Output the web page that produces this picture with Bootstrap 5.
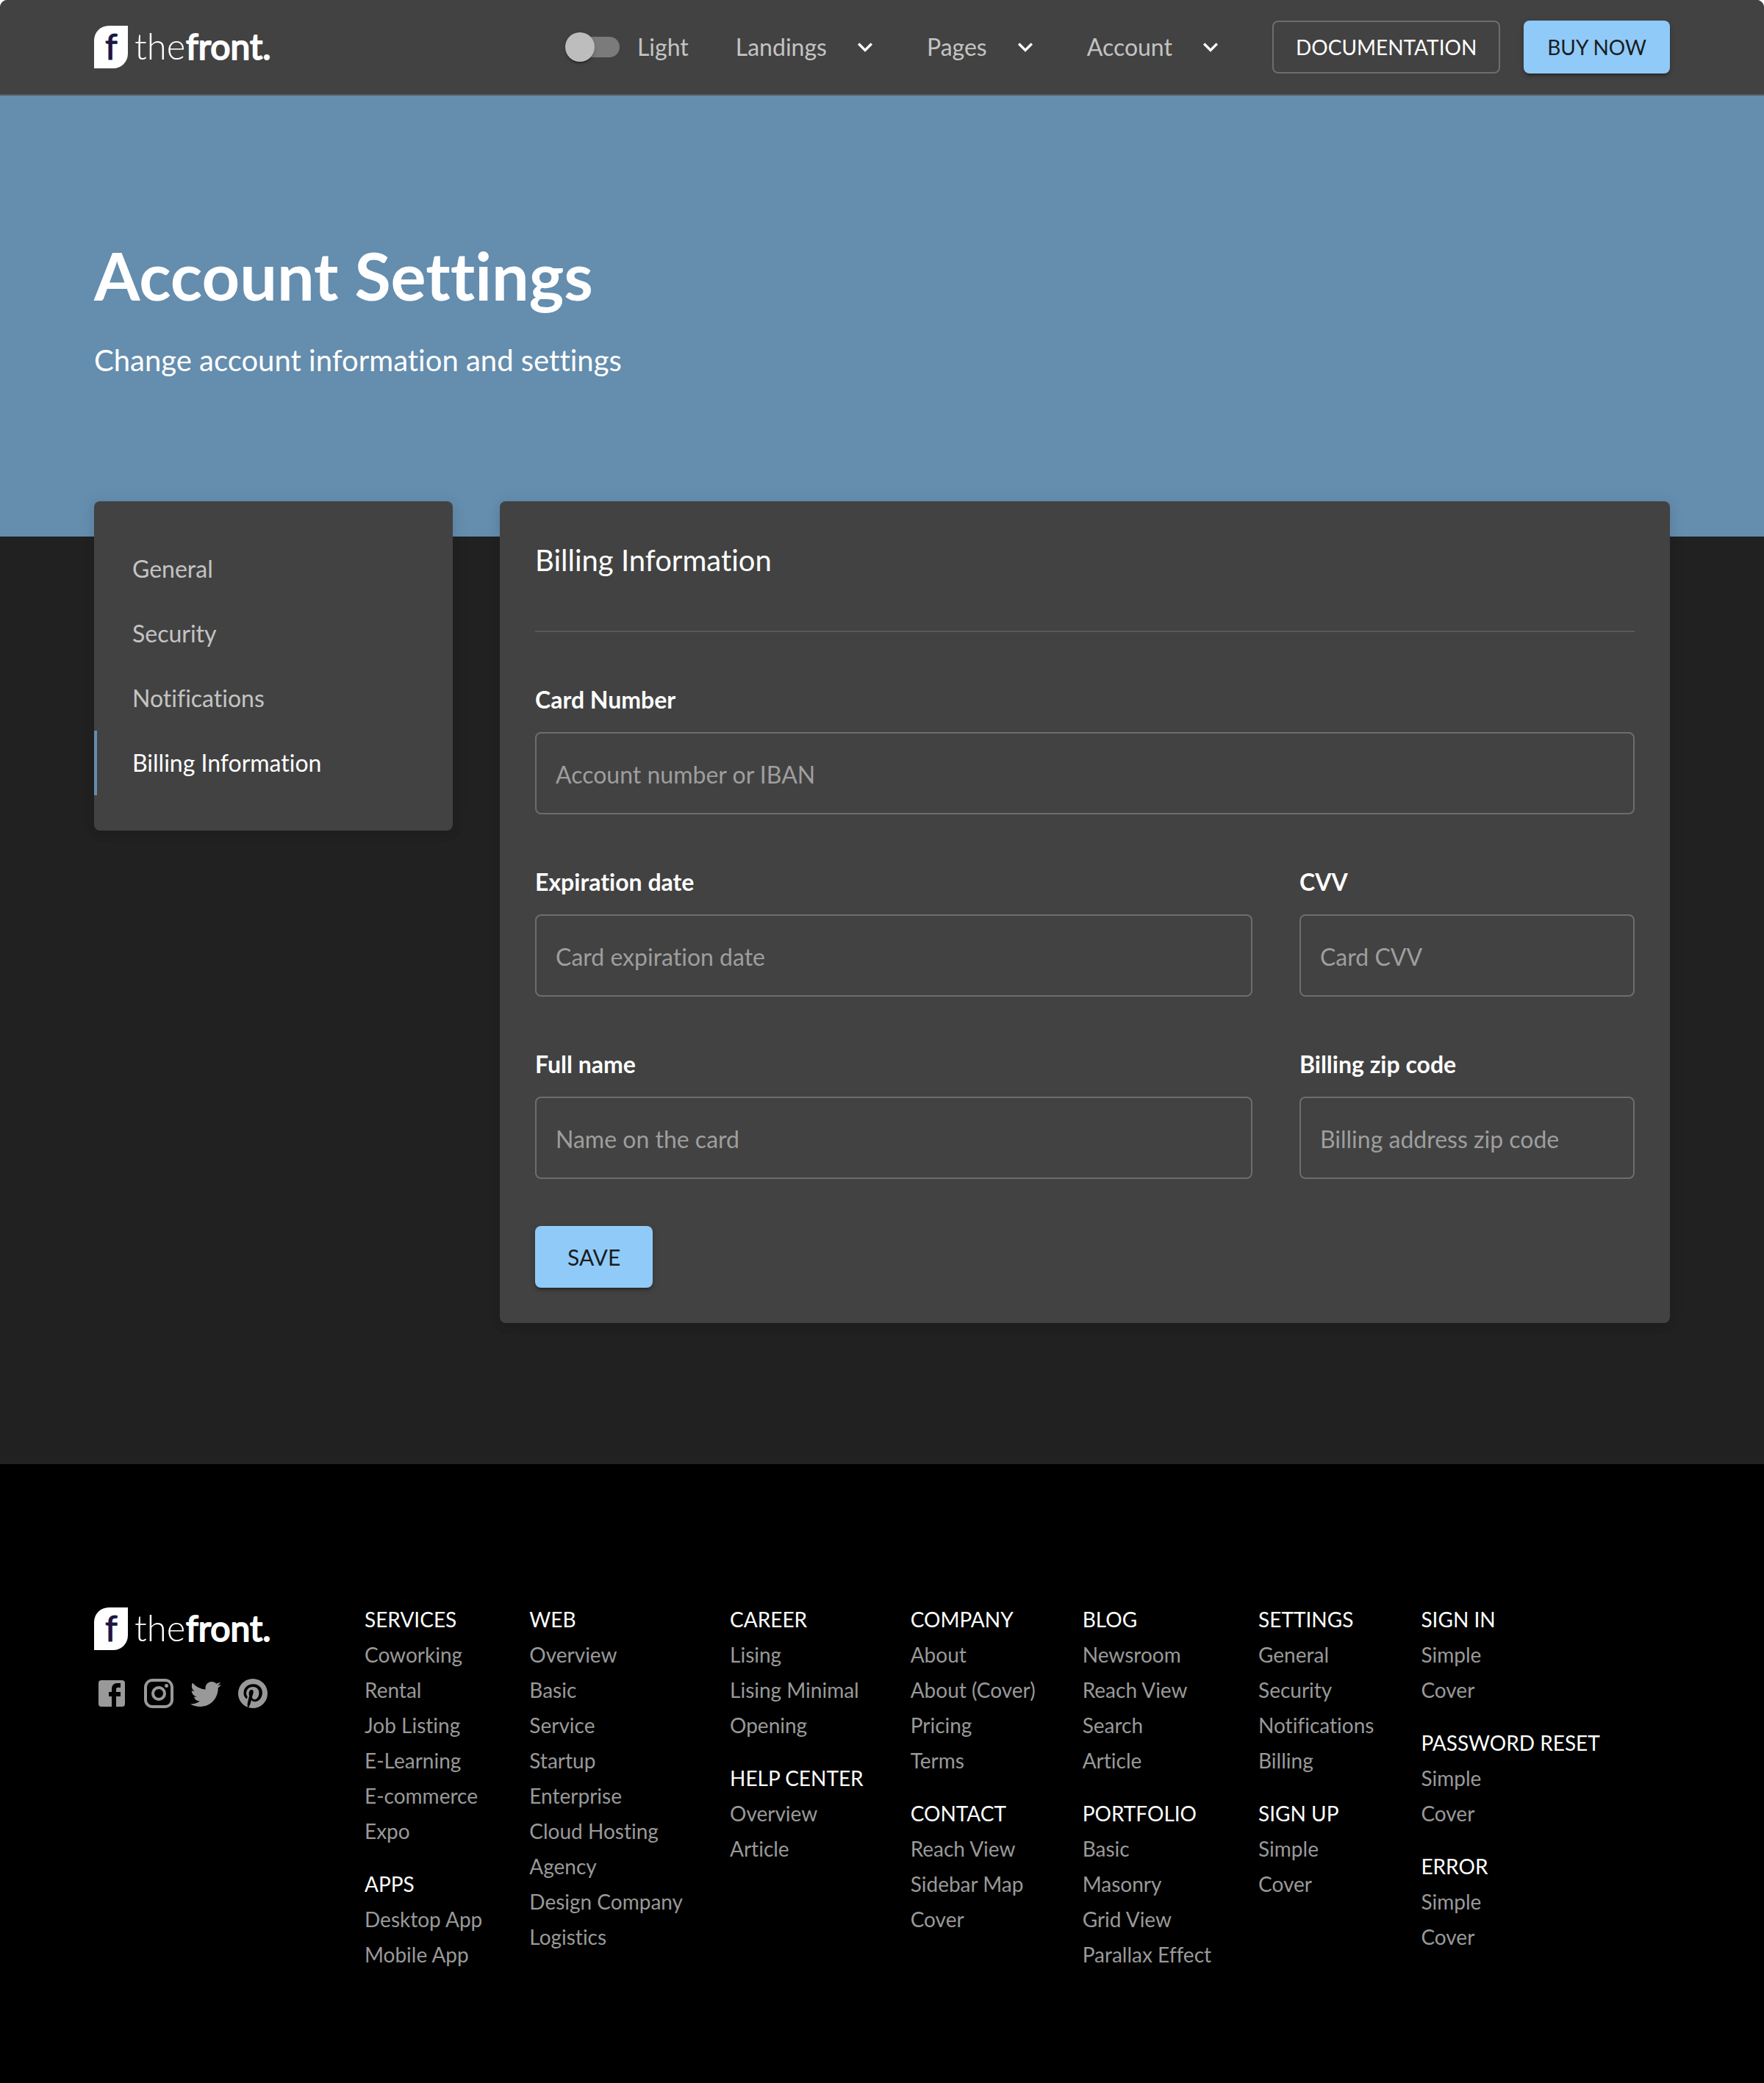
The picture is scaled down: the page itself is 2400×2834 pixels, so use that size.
<!DOCTYPE html>
<html lang="en">
<head>
<meta charset="utf-8">
<meta name="viewport" content="width=device-width, initial-scale=1">
<title>Account Settings – thefront</title>
<link href="https://cdn.jsdelivr.net/npm/bootstrap@5.3.0/dist/css/bootstrap.min.css" rel="stylesheet">
<style>
  :root {
    --paper: #424242;
    --hero: #648dae;
    --primary: #90caf9;
    --muted: rgba(255, 255, 255, .7);
  }
  html { background: #fff; }
  body, input { font-variant-ligatures: none; }
  body { font-family: Lato, sans-serif; font-size: 32px; line-height: 48px; color: #fff; background: transparent; }
  a { text-decoration: none; }
  .page-shell { background: #212121; border-radius: 10px 10px 0 0; overflow: hidden; }
  .page-width { padding-left: 128px; padding-right: 128px; }
  .row { --bs-gutter-x: 64px; }

  .top-bar { background: var(--paper); border-bottom: 2px solid #5a5a5a; padding-top: 28px; padding-bottom: 28px; }
  .top-bar .menu { gap: 64px; }
  .top-bar .actions { gap: 32px; }
  .menu-toggle { display: flex; align-items: center; gap: 32px; padding: 0; border: 0; background: none; color: var(--muted); }
  .menu-toggle svg { width: 40px; height: 40px; fill: #fff; }
  .logo { display: block; width: 240px; height: 58px; }
  .logo-text { font-family: Lato, sans-serif; font-size: 48px; font-weight: 400; stroke-linejoin: round; stroke-width: 2px; fill: #fff; stroke: #fff; }
  .logo-thin { font-weight: 300; stroke-width: 0; font-size: 49px; }
  .logo-mark { fill: #1b1642; stroke: #1b1642; stroke-width: 1px; }

  .theme-switch { gap: 24px; color: var(--muted); }
  .theme-switch input {
    appearance: none; width: 68px; height: 28px; margin: 0 0 0 6px; border-radius: 14px; background: #7b7b7b;
    display: flex; align-items: center; cursor: pointer;
  }
  .theme-switch input::before {
    content: ""; width: 40px; height: 40px; margin-left: -6px; flex: none; border-radius: 50%; background: #bdbdbd;
    box-shadow: 0 4px 2px -2px rgba(0,0,0,.2), 0 2px 2px rgba(0,0,0,.14), 0 2px 6px rgba(0,0,0,.12);
  }
  .theme-switch input:checked::before { margin-left: 34px; }

  .action { --bs-btn-font-size: 28px; --bs-btn-line-height: 48px; --bs-btn-border-radius: 8px; --bs-btn-border-width: 0;
    --bs-btn-padding-y: 12px; --bs-btn-padding-x: 32px; text-transform: uppercase; }
  .action-outline { --bs-btn-color: #fff; --bs-btn-hover-color: #fff; --bs-btn-border-width: 2px; --bs-btn-border-color: #6d6d6d;
    --bs-btn-hover-border-color: #fff; --bs-btn-padding-y: 10px; --bs-btn-padding-x: 30px; }
  .action-solid { --bs-btn-color: #1a1d20; --bs-btn-hover-color: #1a1d20; --bs-btn-bg: var(--primary); --bs-btn-hover-bg: var(--hero);
    box-shadow: 0 6px 2px -4px rgba(0,0,0,.2), 0 4px 4px rgba(0,0,0,.14), 0 2px 10px rgba(0,0,0,.12); }
  .action-large { --bs-btn-font-size: 30px; --bs-btn-line-height: 52px; --bs-btn-padding-y: 16px; --bs-btn-padding-x: 44px; }

  .hero { background: var(--hero); padding-top: 192px; padding-bottom: 208px; }
  .hero h1 { font-size: 90px; line-height: 104px; font-weight: 700; margin-bottom: 32px; }
  .hero p { font-size: 40px; line-height: 64px; }

  .settings { margin-top: -48px; padding-bottom: 192px; }
  .panel { background: var(--paper); border-radius: 8px; box-shadow: 0 6px 12px rgba(0,0,0,.08), 0 0 24px rgba(0,0,0,.06); }
  .side-list { padding: 48px 0; }
  .side-list a { display: block; padding: 20px 48px; border-left: 4px solid transparent; color: var(--muted); }
  .side-list a.active { color: #fff; border-color: var(--hero); }
  .billing { padding: 48px; }
  .billing h2 { font-size: 40px; line-height: 64px; font-weight: 400; }
  .billing hr { margin: 64px 0; border-top: 2px solid #595959; opacity: 1; }
  .billing .row { --bs-gutter-y: 64px; }
  .billing label { display: block; font-weight: 700; line-height: 56px; margin-bottom: 16px; }
  .billing .form-control { height: 112px; padding: 2px 26px 0; font-size: 32px; color: #fff; background: transparent; border: 2px solid #6d6d6d; border-radius: 8px; }
  .billing .form-control::placeholder { color: #9e9e9e; }

  .site-footer { background: #000; padding-top: 192px; padding-bottom: 144px; font-size: 28px; line-height: 40px; }
  .brand-box { height: 64px; margin-bottom: 32px; }
  .social svg { display: block; width: 48px; height: 48px; fill: #999; }
  .link-columns { gap: 64px; }
  .link-columns h3 { font-size: 28px; line-height: 38px; font-weight: 400; margin-bottom: 10px; text-transform: uppercase; }
  .link-columns ul { margin-bottom: 34px; }
  .link-columns li { line-height: 38px; margin-bottom: 10px; }
  .link-columns a { color: #999; white-space: nowrap; }
</style>
</head>
<body>
<svg class="d-none" aria-hidden="true">
  <symbol id="logo" viewBox="0 0 240 58">
    <path d="M0 58V20A20 20 0 0 1 20 0H46V38A20 20 0 0 1 26 58Z" fill="#fff"/>
    <text class="logo-text logo-mark" x="15" y="46">f</text>
    <text class="logo-text logo-thin" x="55" y="46">the</text>
    <text class="logo-text" x="125" y="46">front.</text>
  </symbol>
  <symbol id="chevron" viewBox="0 0 24 24"><path d="M16.59 8.59 12 13.17 7.41 8.59 6 10l6 6 6-6z"/></symbol>
</svg>

<div class="page-shell d-flex flex-column min-vh-100">
  <header class="top-bar page-width d-flex align-items-center justify-content-between">
    <a href="#" aria-label="thefront"><svg class="logo"><use href="#logo"/></svg></a>
    <nav class="menu d-flex align-items-center">
      <div class="theme-switch d-flex align-items-center">
        <input type="checkbox" role="switch" id="theme">
        <label for="theme">Light</label>
      </div>
      <button type="button" class="menu-toggle">Landings<svg><use href="#chevron"/></svg></button>
      <button type="button" class="menu-toggle">Pages<svg><use href="#chevron"/></svg></button>
      <button type="button" class="menu-toggle">Account<svg><use href="#chevron"/></svg></button>
      <div class="actions d-flex">
        <a href="#" class="btn action action-outline">Documentation</a>
        <a href="#" class="btn action action-solid">Buy now</a>
      </div>
    </nav>
  </header>

  <section class="hero page-width">
    <h1>Account Settings</h1>
    <p class="mb-0">Change account information and settings</p>
  </section>

  <main class="settings page-width">
    <div class="row align-items-start">
      <div class="col-3">
        <nav class="panel side-list">
          <a href="#">General</a>
          <a href="#">Security</a>
          <a href="#">Notifications</a>
          <a href="#" class="active" aria-current="page">Billing Information</a>
        </nav>
      </div>
      <div class="col-9">
        <form class="panel billing">
          <h2 class="mb-0">Billing Information</h2>
          <hr>
          <div class="row">
            <div class="col-12">
              <label for="card">Card Number</label>
              <input class="form-control" id="card" type="text" placeholder="Account number or IBAN">
            </div>
            <div class="col-8">
              <label for="exp">Expiration date</label>
              <input class="form-control" id="exp" type="text" placeholder="Card expiration date">
            </div>
            <div class="col-4">
              <label for="cvv">CVV</label>
              <input class="form-control" id="cvv" type="text" placeholder="Card CVV">
            </div>
            <div class="col-8">
              <label for="name">Full name</label>
              <input class="form-control" id="name" type="text" placeholder="Name on the card">
            </div>
            <div class="col-4">
              <label for="zip">Billing zip code</label>
              <input class="form-control" id="zip" type="text" placeholder="Billing address zip code">
            </div>
            <div class="col-12 d-flex">
              <button type="submit" class="btn action action-solid action-large">Save</button>
            </div>
          </div>
        </form>
      </div>
    </div>
  </main>

  <footer class="site-footer page-width flex-grow-1">
    <div class="row">
      <div class="col-2">
        <div class="brand-box d-flex align-items-center"><a href="#" aria-label="thefront"><svg class="logo"><use href="#logo"/></svg></a></div>
        <div class="social d-flex gap-3">
          <a href="#" aria-label="Facebook"><svg viewBox="0 0 24 24"><path d="M5 3h14a2 2 0 0 1 2 2v14a2 2 0 0 1-2 2H5a2 2 0 0 1-2-2V5a2 2 0 0 1 2-2m13 2h-2.500A3.500 3.500 0 0 0 12 8.500V11h-2v3h2v7h3v-7h3v-3h-3V9a1 1 0 0 1 1-1h2V5z"/></svg></a>
          <a href="#" aria-label="Instagram"><svg viewBox="0 0 24 24"><path d="M7.800 2h8.400C19.400 2 22 4.600 22 7.800v8.400a5.800 5.800 0 0 1-5.800 5.800H7.800C4.600 22 2 19.400 2 16.200V7.800A5.800 5.800 0 0 1 7.800 2m-.2 2A3.600 3.600 0 0 0 4 7.600v8.800C4 18.390 5.610 20 7.600 20h8.800a3.600 3.600 0 0 0 3.600-3.600V7.600C20 5.610 18.390 4 16.400 4H7.600m9.650 1.500a1.250 1.250 0 0 1 1.250 1.250A1.250 1.250 0 0 1 17.250 8 1.250 1.250 0 0 1 16 6.750a1.250 1.250 0 0 1 1.250-1.250M12 7a5 5 0 0 1 5 5 5 5 0 0 1-5 5 5 5 0 0 1-5-5 5 5 0 0 1 5-5m0 2a3 3 0 0 0-3 3 3 3 0 0 0 3 3 3 3 0 0 0 3-3 3 3 0 0 0-3-3z"/></svg></a>
          <a href="#" aria-label="Twitter"><svg viewBox="0 0 24 24"><path d="M22.460 6c-.77.35-1.600.58-2.460.69.88-.53 1.560-1.370 1.880-2.380-.83.5-1.750.85-2.720 1.050C18.370 4.500 17.260 4 16 4c-2.350 0-4.270 1.920-4.270 4.290 0 .34.040.67.110.98C8.280 9.090 5.110 7.380 3 4.790c-.37.63-.58 1.370-.58 2.150 0 1.490.75 2.810 1.910 3.560-.71 0-1.370-.2-1.950-.5v.03c0 2.080 1.480 3.820 3.440 4.210a4.220 4.220 0 0 1-1.930.07 4.280 4.280 0 0 0 4 2.980 8.521 8.521 0 0 1-5.330 1.840c-.34 0-.68-.02-1.020-.06C3.440 20.290 5.700 21 8.120 21 16 21 20.330 14.460 20.330 8.790c0-.19 0-.37-.01-.56.84-.6 1.560-1.360 2.140-2.230z"/></svg></a>
          <a href="#" aria-label="Pinterest"><svg viewBox="0 0 24 24"><path d="M9.040 21.540c.96.29 1.930.46 2.960.46a10 10 0 0 0 10-10A10 10 0 0 0 12 2 10 10 0 0 0 2 12c0 4.250 2.670 7.900 6.440 9.340-.09-.78-.18-2.070 0-2.960l1.150-4.940s-.29-.58-.29-1.500c0-1.380.86-2.410 1.840-2.410.86 0 1.260.63 1.260 1.440 0 .86-.57 2.090-.86 3.270-.17.98.52 1.840 1.520 1.840 1.780 0 3.160-1.900 3.160-4.580 0-2.400-1.720-4.040-4.190-4.040-2.820 0-4.480 2.100-4.480 4.310 0 .86.28 1.730.74 2.300.09.06.09.14.06.29l-.29 1.090c0 .17-.11.23-.28.11-1.280-.56-2.020-2.380-2.020-3.850 0-3.160 2.240-6.030 6.560-6.030 3.440 0 6.120 2.470 6.120 5.750 0 3.440-2.130 6.200-5.180 6.200-.97 0-1.920-.52-2.260-1.130l-.67 2.370c-.23.86-.86 2.010-1.290 2.700v-.03z"/></svg></a>
        </div>
      </div>
      <div class="col-10 link-columns d-flex align-items-start">
        <div>
          <h3>Services</h3>
          <ul class="list-unstyled">
            <li><a href="#">Coworking</a></li><li><a href="#">Rental</a></li><li><a href="#">Job Listing</a></li>
            <li><a href="#">E-Learning</a></li><li><a href="#">E-commerce</a></li><li><a href="#">Expo</a></li>
          </ul>
          <h3>Apps</h3>
          <ul class="list-unstyled mb-0">
            <li><a href="#">Desktop App</a></li><li><a href="#">Mobile App</a></li>
          </ul>
        </div>
        <div>
          <h3>Web</h3>
          <ul class="list-unstyled mb-0">
            <li><a href="#">Overview</a></li><li><a href="#">Basic</a></li><li><a href="#">Service</a></li>
            <li><a href="#">Startup</a></li><li><a href="#">Enterprise</a></li><li><a href="#">Cloud Hosting</a></li>
            <li><a href="#">Agency</a></li><li><a href="#">Design Company</a></li><li><a href="#">Logistics</a></li>
          </ul>
        </div>
        <div>
          <h3>Career</h3>
          <ul class="list-unstyled">
            <li><a href="#">Lising</a></li><li><a href="#">Lising Minimal</a></li><li><a href="#">Opening</a></li>
          </ul>
          <h3>Help center</h3>
          <ul class="list-unstyled mb-0">
            <li><a href="#">Overview</a></li><li><a href="#">Article</a></li>
          </ul>
        </div>
        <div>
          <h3>Company</h3>
          <ul class="list-unstyled">
            <li><a href="#">About</a></li><li><a href="#">About (Cover)</a></li><li><a href="#">Pricing</a></li><li><a href="#">Terms</a></li>
          </ul>
          <h3>Contact</h3>
          <ul class="list-unstyled mb-0">
            <li><a href="#">Reach View</a></li><li><a href="#">Sidebar Map</a></li><li><a href="#">Cover</a></li>
          </ul>
        </div>
        <div>
          <h3>Blog</h3>
          <ul class="list-unstyled">
            <li><a href="#">Newsroom</a></li><li><a href="#">Reach View</a></li><li><a href="#">Search</a></li><li><a href="#">Article</a></li>
          </ul>
          <h3>Portfolio</h3>
          <ul class="list-unstyled mb-0">
            <li><a href="#">Basic</a></li><li><a href="#">Masonry</a></li><li><a href="#">Grid View</a></li><li><a href="#">Parallax Effect</a></li>
          </ul>
        </div>
        <div>
          <h3>Settings</h3>
          <ul class="list-unstyled">
            <li><a href="#">General</a></li><li><a href="#">Security</a></li><li><a href="#">Notifications</a></li><li><a href="#">Billing</a></li>
          </ul>
          <h3>Sign up</h3>
          <ul class="list-unstyled mb-0">
            <li><a href="#">Simple</a></li><li><a href="#">Cover</a></li>
          </ul>
        </div>
        <div>
          <h3>Sign in</h3>
          <ul class="list-unstyled">
            <li><a href="#">Simple</a></li><li><a href="#">Cover</a></li>
          </ul>
          <h3>Password reset</h3>
          <ul class="list-unstyled">
            <li><a href="#">Simple</a></li><li><a href="#">Cover</a></li>
          </ul>
          <h3>Error</h3>
          <ul class="list-unstyled mb-0">
            <li><a href="#">Simple</a></li><li><a href="#">Cover</a></li>
          </ul>
        </div>
      </div>
    </div>
  </footer>
</div>
<script src="https://cdn.jsdelivr.net/npm/bootstrap@5.3.0/dist/js/bootstrap.bundle.min.js"></script>
</body>
</html>
